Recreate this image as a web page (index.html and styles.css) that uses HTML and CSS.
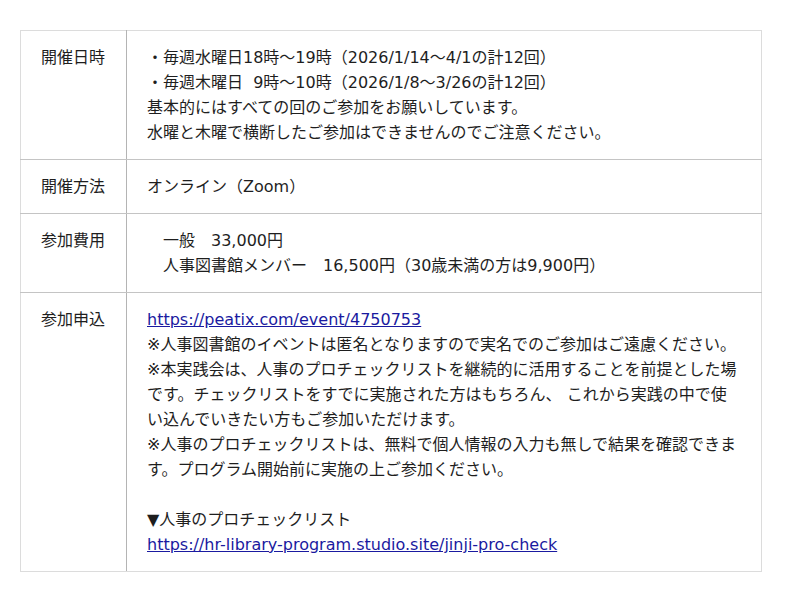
FILE: index.html
```html
<!DOCTYPE html>
<html lang="ja">
<head>
<meta charset="utf-8">
<title>開催概要</title>
<link rel="stylesheet" href="styles.css">
</head>
<body>
<div class="wrap">
<table class="info">
  <colgroup><col class="c-label"><col class="c-body"></colgroup>
  <tbody>
    <tr>
      <th>開催日時</th>
      <td>・毎週水曜日18時〜19時（2026/1/14〜4/1の計12回）<br>・毎週木曜日&nbsp; 9時〜10時（2026/1/8〜3/26の計12回）<br>基本的にはすべての回のご参加をお願いしています。<br>水曜と木曜で横断したご参加はできませんのでご注意ください。</td>
    </tr>
    <tr>
      <th>開催方法</th>
      <td>オンライン（Zoom）</td>
    </tr>
    <tr>
      <th>参加費用</th>
      <td>　一般　33,000円<br>　人事図書館メンバー　16,500円（30歳未満の方は9,900円）</td>
    </tr>
    <tr>
      <th>参加申込</th>
      <td><a href="#">https://peatix.com/event/4750753</a><br>※人事図書館のイベントは匿名となりますので実名でのご参加はご遠慮ください。<br>※本実践会は、人事のプロチェックリストを継続的に活用することを前提とした場です。チェックリストをすでに実施された方はもちろん、 これから実践の中で使い込んでいきたい方もご参加いただけます。<br>※人事のプロチェックリストは、無料で個人情報の入力も無しで結果を確認できます。プログラム開始前に実施の上ご参加ください。<br><br>▼人事のプロチェックリスト<br><a href="#">https://hr-library-program.studio.site/jinji-pro-check</a></td>
    </tr>
  </tbody>
</table>
</div>
</body>
</html>
```
FILE: styles.css
```css
html, body {
  margin: 0;
  padding: 0;
  background: #fff;
}
body {
  font-family: "DejaVu Sans", "Noto Sans CJK JP", sans-serif;
  font-size: 16px;
  line-height: 25px;
  color: #1e1e1e;
}
.wrap {
  padding: 30px 0 0 20px;
}
.info {
  width: 742px;
  border-collapse: collapse;
  table-layout: fixed;
  border: 1px solid #dcdcdc;
}
.c-label {
  width: 106px;
}
.info th,
.info td {
  vertical-align: top;
  text-align: left;
  font-weight: normal;
  padding: 14px 20px;
  border-bottom: 1px solid #c4c4c4;
}
.info tr:last-child th,
.info tr:last-child td {
  border-bottom-color: #dcdcdc;
}
.info th {
  border-right: 1px solid #b4b4b4;
}
.info a {
  color: #1a1aa0;
  text-decoration: underline;
}
```
